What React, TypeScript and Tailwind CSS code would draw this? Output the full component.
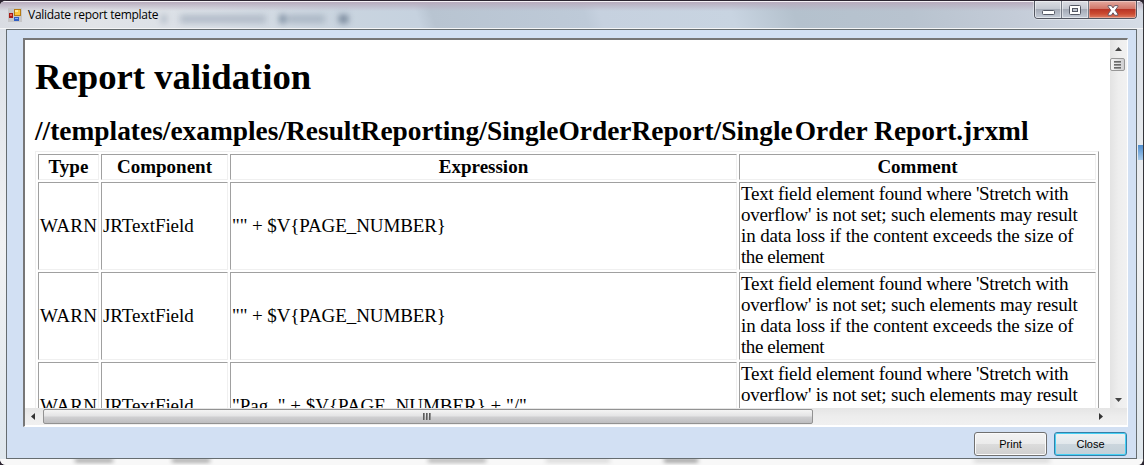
import React from "react";

const COMMENT = [
  { text: "Text field element found where 'Stretch with", spacing: "tracking-[-0.26px]" },
  { text: "overflow' is not set; such elements may result", spacing: "tracking-[-0.2px]" },
  { text: "in data loss if the content exceeds the size of", spacing: "tracking-[-0.12px]" },
  { text: "the element", spacing: "tracking-[-0.45px]" },
];

const ROWS = [
  { type: "WARN", component: "JRTextField", expression: '"" + $V{PAGE_NUMBER}' },
  { type: "WARN", component: "JRTextField", expression: '"" + $V{PAGE_NUMBER}' },
  { type: "WARN", component: "JRTextField", expression: '"Pag. " + $V{PAGE_NUMBER} + "/"' },
];

const CELL =
  "flex items-center whitespace-nowrap border border-t-[#a0a0a0] border-l-[#a0a0a0] border-r-[#f0f0f0] border-b-[#f0f0f0] px-px";

function FormIcon() {
  return (
    <svg width="14" height="14" viewBox="0 0 14 14" shapeRendering="crispEdges">
      <rect width="14" height="14" fill="#c6c6c8" />
      <rect x="6" y="1" width="7" height="7" fill="#b67c13" />
      <rect x="7" y="2" width="5" height="5" fill="#fbc63a" />
      <rect x="7" y="2" width="3" height="2" fill="#ffe799" />
      <rect x="1" y="5" width="4" height="5" fill="#a51b16" />
      <rect x="2" y="6" width="2" height="2" fill="#ee6756" />
      <rect x="6" y="9" width="5" height="4" fill="#315fc3" />
      <rect x="7" y="10" width="3" height="1" fill="#86b2f4" />
    </svg>
  );
}

function TitleBar() {
  return (
    <div className="relative flex h-[26px] shrink-0 bg-[linear-gradient(72deg,#d9dce2_0px,#e1e4e8_90px,#d9dfe6_210px,#c9d4df_330px,#c6d2df_400px,#b8c4d1_415px,#becad8_560px,#c6d1df_575px,#c8d4e1_700px,#b4c1cd_760px,#b8c3cf_870px,#c4ccd8_970px,#d6dde6_1090px)]">
      <div className="absolute inset-x-0 top-0 h-[9px] bg-linear-to-b from-[#b8abbd] to-transparent" />
      <div className="absolute left-[162px] top-[13px] flex items-center gap-[14px] blur-[3px]">
        <div className="h-2 w-1 bg-[#a0abba]" />
        <div className="h-2 w-[86px] bg-[#b0bac7]" />
        <div className="h-2 w-[5px] bg-[#5f7389]" />
        <div className="-ml-3 h-2 w-[38px] bg-[#aab6c4]" />
        <div className="h-2 w-[9px] bg-[#708094]" />
      </div>
      <div className="relative flex flex-1 pl-[8px] pt-[6px]">
        <FormIcon />
        <span className="ml-[6px] font-['Open_Sans',sans-serif] text-[12px] leading-[14px] tracking-[-0.27px] text-black">
          Validate report template
        </span>
      </div>
      <div className="relative mr-[6px] -mt-px flex h-[18px] shrink-0 overflow-hidden rounded-b-[4px] border border-t-0 border-[#535661] shadow-[0_0_0_1px_#ffffff66]">
        <div className="flex w-[27px] items-center justify-center border-r border-[#747985] bg-[linear-gradient(#dbdce3_0%,#c4c8d2_46%,#a5abb7_50%,#c5ccd7_100%)] shadow-[inset_0_0_0_1px_#ffffff80]">
          <svg width="13" height="6" className="mt-[6px]">
            <rect x="0.5" y="0.5" width="12" height="4" rx="1" fill="#fff" stroke="#555965" />
          </svg>
        </div>
        <div className="flex w-[27px] items-center justify-center border-r border-[#747985] bg-[linear-gradient(#dbdce3_0%,#c4c8d2_46%,#a5abb7_50%,#c5ccd7_100%)] shadow-[inset_0_0_0_1px_#ffffff80]">
          <svg width="12" height="10" className="mt-px">
            <rect x="0.5" y="0.5" width="11" height="9" rx="1" fill="#fff" stroke="#555965" />
            <rect x="3.5" y="3.5" width="5" height="3" fill="#bfc5cf" stroke="#555965" />
          </svg>
        </div>
        <div className="flex w-[47px] items-center justify-center bg-[linear-gradient(#e4aaa0_0%,#d17669_45%,#b93526_50%,#cb4b31_75%,#df7e64_100%)] shadow-[inset_0_0_0_1px_#ffffff55]">
          <svg width="12" height="11" viewBox="0 0 13 12" className="mt-px">
            <path
              d="M1.2.7h3.5l1.8 2.5L8.3.7h3.5v1.1L8.9 5.7l2.9 4.1v1.4H8.3L6.5 8.5l-1.8 2.7H1.2V9.8l2.9-4.1-2.9-3.9Z"
              fill="#fff"
              stroke="#5e5260"
            />
          </svg>
        </div>
      </div>
    </div>
  );
}

function ReportTable() {
  return (
    <div className="ml-[10px] grid w-[1064px] grid-cols-[61px_127px_507px_357px] gap-[2px] border border-t-[#f0f0f0] border-l-[#f0f0f0] border-r-[#a0a0a0] border-b-[#a0a0a0] p-[2px] text-[19px] leading-[21px]">
      {["Type", "Component", "Expression", "Comment"].map((h) => (
        <div key={h} className={`${CELL} h-[26px] justify-center pb-px font-bold`}>
          {h}
        </div>
      ))}
      {ROWS.map((r, i) => (
        <React.Fragment key={i}>
          <div className={`${CELL} h-[88px] pb-px tracking-[0.35px]`}>{r.type}</div>
          <div className={`${CELL} pb-px tracking-[-0.08px]`}>{r.component}</div>
          <div className={`${CELL} pb-px ${i < 2 ? "tracking-[-0.1px]" : ""}`}>{r.expression}</div>
          <div className={`${CELL} pb-[2px]`}>
            <div>
              {COMMENT.map((line) => (
                <div key={line.text} className={line.spacing}>
                  {line.text}
                </div>
              ))}
            </div>
          </div>
        </React.Fragment>
      ))}
    </div>
  );
}

function VerticalScrollbar() {
  return (
    <div className="flex w-[17px] shrink-0 flex-col items-center bg-linear-to-r from-[#e3e3e3] via-[#eeeeee] to-[#f1f1f1]">
      <svg width="7" height="4" className="mt-[7px]">
        <path d="M0 4L3.5 0L7 4Z" fill="#444" />
      </svg>
      <div className="mt-[7px] mr-[2px] flex h-[13px] w-[15px] flex-col items-center justify-center gap-px rounded-[2px] border border-[#979797] bg-linear-to-r from-[#f5f5f5] to-[#cfcfd1]">
        <div className="h-[2px] w-[7px] bg-linear-to-b from-[#555] to-[#aaa]" />
        <div className="h-[2px] w-[7px] bg-linear-to-b from-[#555] to-[#aaa]" />
        <div className="h-[2px] w-[7px] bg-linear-to-b from-[#555] to-[#aaa]" />
      </div>
      <div className="flex-1" />
      <svg width="7" height="4" className="mb-[6px]">
        <path d="M0 0L3.5 4L7 0Z" fill="#444" />
      </svg>
    </div>
  );
}

function HorizontalScrollbar() {
  return (
    <div className="flex h-[17px] shrink-0 items-center bg-linear-to-b from-[#e5e5e5] via-[#ededed] to-[#f0f0f0]">
      <svg width="4" height="7" className="ml-[6px]">
        <path d="M4 0L0 3.5L4 7Z" fill="#333" />
      </svg>
      <div className="ml-[8px] flex h-[15px] w-[770px] items-center justify-center gap-px rounded-[2px] border border-[#929292] bg-[linear-gradient(#f4f4f4_0%,#e4e4e5_45%,#cfcfd1_55%,#bebec0_100%)] pr-[2px]">
        <div className="h-[7px] w-[2px] bg-linear-to-r from-[#444] to-[#aaa]" />
        <div className="h-[7px] w-[2px] bg-linear-to-r from-[#444] to-[#aaa]" />
        <div className="h-[7px] w-[2px] bg-linear-to-r from-[#444] to-[#aaa]" />
      </div>
      <div className="flex-1" />
      <svg width="4" height="7" className="mr-[24px]">
        <path d="M0 0L4 3.5L0 7Z" fill="#333" />
      </svg>
    </div>
  );
}

export default function App() {
  return (
    <div className="h-[465px] w-[1144px] overflow-hidden bg-[#2b2430]">
      <div className="relative flex h-[465px] w-[1144px] flex-col overflow-hidden rounded-[6px] border-t border-r border-t-[#2b2430] border-r-[#35353a] bg-[#f5f6f8]">
        <div className="h-px shrink-0 bg-[#f4f0f5]" />
        <TitleBar />
        <div className="h-px shrink-0 bg-[#f4f5f6]" />
        <div className="flex h-[430px] shrink-0 bg-linear-to-b from-[#dce1e8] via-[#f1f2f3] to-[#dfe7ed]">
          <div className="ml-[6px] flex w-[1131px] flex-col border border-[#666d70] bg-[#d2e0f3] pl-[16px] pt-[8px]">
            <div className="flex h-[389px] w-[1105px] shrink-0 flex-col border-2 border-r border-b border-t-[#777] border-l-[#777] border-r-white border-b-white bg-white">
              <div className="flex h-[368px] shrink-0">
                <div className="min-w-0 flex-1 overflow-hidden font-['Liberation_Serif',serif] text-black">
                  <h1 className="ml-[10px] mt-[14px] h-[46px] whitespace-nowrap text-[36.7px] leading-[46px] font-bold">
                    Report validation
                  </h1>
                  <h2 className="ml-[10px] mt-[15px] mb-[4px] h-[32px] whitespace-nowrap text-[27.4px] leading-[32px] font-bold">
                    //templates/examples/ResultReporting/SingleOrderReport/Single
                    <span className="ml-[2px]">Order Report.jrxml</span>
                  </h2>
                  <ReportTable />
                </div>
                <VerticalScrollbar />
              </div>
              <HorizontalScrollbar />
            </div>
            <div className="mt-[5px] flex justify-end gap-[7px] pr-[9px] font-['Liberation_Sans',sans-serif] text-[11px] text-black">
              <button className="h-[24px] w-[73px] rounded-[3px] border border-[#707070] bg-[linear-gradient(#f3f3f3_0%,#ebebeb_50%,#dcdcdc_51%,#cfcfcf_100%)] pt-px shadow-[inset_0_0_0_1px_#fafafa]">
                Print
              </button>
              <button className="h-[24px] w-[73px] rounded-[3px] border border-[#3480a8] bg-[linear-gradient(#eff2f4_0%,#e0e7eb_50%,#cbd6dd_51%,#c2d0d8_100%)] pt-px shadow-[inset_0_0_0_1px_#45d0f5]">
                Close
              </button>
            </div>
          </div>
          <div className="mt-[116px] ml-px h-[15px] w-[5px] bg-linear-to-b from-[#4d8dce] to-[#a9ccec]" />
        </div>
        <div className="relative h-[6px] shrink-0 overflow-hidden bg-[#f8f8f8]">
          <div className="flex pl-[75px] blur-[2px]">
            <div className="h-[3px] w-[38px] bg-[#888]" />
            <div className="ml-[59px] h-[3px] w-[38px] bg-[#888]" />
            <div className="ml-[218px] h-[3px] w-[58px] bg-[#999]" />
            <div className="ml-[60px] h-[3px] w-[64px] bg-[#ccc]" />
            <div className="ml-[54px] h-[3px] w-[34px] bg-[#777]" />
            <div className="ml-[276px] h-[3px] w-[76px] bg-[#ccc]" />
          </div>
        </div>
      </div>
    </div>
  );
}
